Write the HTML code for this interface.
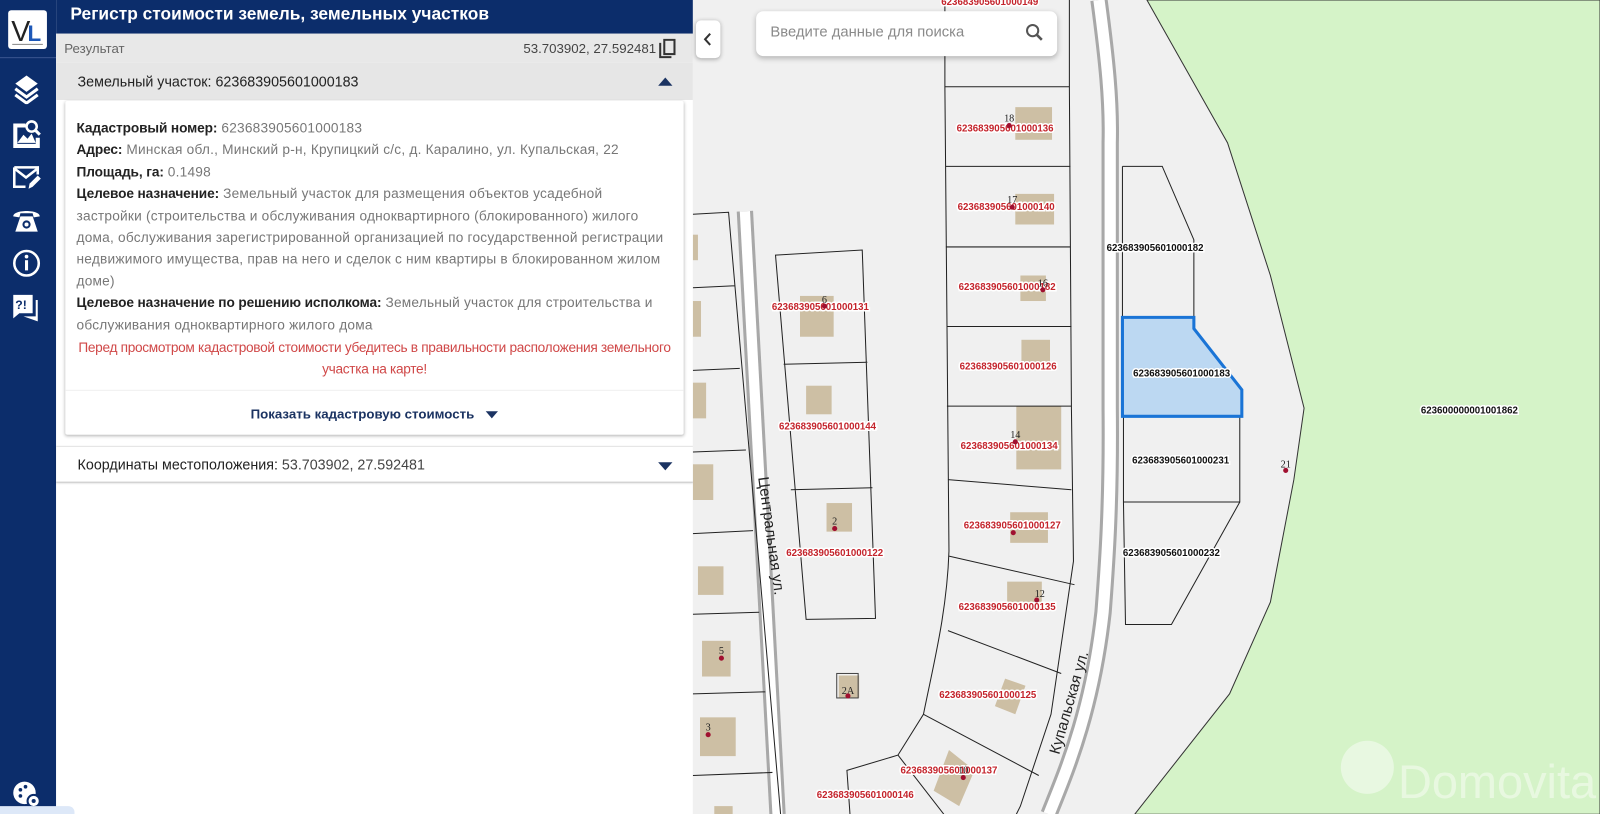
<!DOCTYPE html>
<html><head><meta charset="utf-8">
<style>
*{margin:0;padding:0;box-sizing:border-box}
html,body{width:1600px;height:814px;overflow:hidden;background:#f0f0f0}
#wrap{position:absolute;left:0;top:0;width:1568px;height:798px;transform:scale(1.0204);transform-origin:0 0;font-family:"Liberation Sans",sans-serif;overflow:hidden;background:#f0f0f0}
#side{position:absolute;left:0;top:0;width:55px;height:798px;background:#0c2d6b}
#logo{position:absolute;left:8px;top:10px;width:38px;height:38px;background:#fff;border-radius:3px}
#sep{position:absolute;left:0;top:56px;width:55px;border-top:1px solid #3a5590}
.ic{position:absolute;left:11px;width:30px;height:30px}
#panel{position:absolute;left:55px;top:0;width:624px;height:798px;background:#fff}
#hdr{height:33px;background:#0c2d6b;color:#fff;font-weight:bold;font-size:17px;padding:4px 0 0 14px}
#res{height:28px;background:#e8e8e8;color:#666;font-size:13px;padding:7px 8px;position:relative}
#res .r{position:absolute;right:36px;top:7px}
#sec{height:37px;background:#e6e6e6;font-size:14px;color:#222;padding:11px 21px;position:relative}
.tri{position:absolute;right:20px;width:0;height:0;border-left:7px solid transparent;border-right:7px solid transparent}
#card{position:absolute;left:9px;top:99px;width:606px;height:327px;background:#fff;box-shadow:0 1px 3px rgba(0,0,0,.3);border-radius:2px}
#txt{padding:16px 11px 0 11px;font-size:13.4px;line-height:21.4px;color:#777;white-space:nowrap;letter-spacing:0.22px}
#txt b{color:#222;font-weight:bold;letter-spacing:-0.1px}
.warn{color:#d04848;text-align:center;margin-top:1px;letter-spacing:-0.3px}
#btn{position:absolute;left:0;top:283px;width:606px;height:44px;border-top:1px solid #f0f0f0;text-align:center;font-size:13px;font-weight:bold;color:#1b3362;padding-top:15px}
#coord{position:absolute;left:0;top:437px;width:624px;height:36px;border-top:1px solid #e4e4e4;border-bottom:1px solid #ccc;box-shadow:0 1px 2px rgba(0,0,0,.2);font-size:14px;color:#222;padding:9px 21px}
#map{position:absolute;left:679px;top:0;width:889px;height:798px}
#search{position:absolute;left:741px;top:11px;width:295px;height:44px;background:#fff;border-radius:7px;box-shadow:0 2px 5px rgba(0,0,0,.25);font-size:14.5px;color:#8a8a8a;padding:13px 14px}
#back{position:absolute;left:682px;top:20px;width:24px;height:37px;background:#fff;border-radius:5px;box-shadow:0 1px 4px rgba(0,0,0,.3)}
</style></head><body><div id="wrap">
<div id="side">
 <div id="logo"><svg width="38" height="38"><text x="3" y="30" font-family="Liberation Sans" font-size="28" fill="#222">V</text><text x="19" y="30" font-family="Liberation Sans" font-size="22" font-weight="bold" fill="#1d58b8">L</text><rect x="4" y="33" width="30" height="1" fill="#888"/></svg></div>
 <div id="sep"></div>
 <svg class="ic" style="top:72px" viewBox="0 0 30 30"><path d="M15 2 L26 10 L15 18 L4 10Z" fill="#fff"/><path d="M4 15 L15 23 L26 15" stroke="#fff" stroke-width="3" fill="none"/><path d="M4 21 L15 29 L26 21" stroke="#fff" stroke-width="3" fill="none"/></svg>
 <svg class="ic" style="top:115px" viewBox="0 0 30 30"><path d="M2 6 H14 V10 H6 V26 H24 V20 H28 V30 H2Z" fill="#fff"/><path d="M6 25 L12 17 L16 21 L20 16 L24 25Z" fill="#fff"/><circle cx="20" cy="9" r="5" stroke="#fff" stroke-width="2.5" fill="none"/><path d="M23.5 12.5 L28 17" stroke="#fff" stroke-width="3"/></svg>
 <svg class="ic" style="top:158px" viewBox="0 0 30 30"><path d="M3 6 H26 V13 M3 6 V25 H14" stroke="#fff" stroke-width="2.5" fill="none"/><path d="M3 7 L14.5 16 L26 7" stroke="#fff" stroke-width="2.5" fill="none"/><path d="M17 27 L18 22 L26 14 L29 17 L21 25Z" fill="#fff"/></svg>
 <svg class="ic" style="top:200px" viewBox="0 0 30 30"><path d="M2 12 C2 5 28 5 28 12 L22 13 L21 9 H9 L8 13Z" fill="#fff"/><path d="M9 12 H21 L26 27 H4Z" fill="#fff"/><circle cx="15" cy="20" r="4" fill="#0c2d6b"/><circle cx="15" cy="20" r="2" fill="#fff"/></svg>
 <svg class="ic" style="top:243px" viewBox="0 0 30 30"><circle cx="15" cy="15" r="12" stroke="#fff" stroke-width="2.5" fill="none"/><rect x="13.5" y="12" width="3" height="10" fill="#fff"/><circle cx="15" cy="8.5" r="1.8" fill="#fff"/></svg>
 <svg class="ic" style="top:286px" viewBox="0 0 30 30"><path d="M2 3 H21 V21 H8 L2 26Z" fill="#fff"/><path d="M24 8 V24 H12 L26 29 V8Z" fill="#fff"/><text x="4" y="17" font-size="12" font-weight="bold" fill="#0c2d6b" font-family="Liberation Sans">?!</text></svg>
 <svg class="ic" style="top:763px" viewBox="0 0 30 30"><circle cx="13" cy="14" r="11" fill="#fff"/><circle cx="9" cy="11" r="1.8" fill="#0c2d6b"/><circle cx="14" cy="8" r="1.8" fill="#0c2d6b"/><circle cx="9" cy="17" r="1.8" fill="#0c2d6b"/><circle cx="22" cy="22" r="6" fill="#fff" stroke="#0c2d6b" stroke-width="2"/><circle cx="22" cy="22" r="2" fill="#0c2d6b"/></svg>
</div>
<div id="panel">
 <div id="hdr">Регистр стоимости земель, земельных участков</div>
 <div id="res">Результат<span class="r" style="color:#444">53.703902, 27.592481</span>
  <svg style="position:absolute;right:16px;top:5px" width="18" height="20" viewBox="0 0 18 20"><path d="M2 4 V18 H13" stroke="#333" stroke-width="2" fill="none"/><rect x="6" y="1" width="10" height="14" stroke="#333" stroke-width="2" fill="none"/></svg></div>
 <div id="sec">Земельный участок: 623683905601000183<div class="tri" style="top:15px;border-bottom:8px solid #1b3362"></div></div>
 <div id="card"><div id="txt">
  <b>Кадастровый номер:</b> 623683905601000183<br>
  <b>Адрес:</b> Минская обл., Минский р-н, Крупицкий с/с, д. Каралино, ул. Купальская, 22<br>
  <b>Площадь, га:</b> 0.1498<br>
  <b>Целевое назначение:</b> Земельный участок для размещения объектов усадебной<br>застройки (строительства и обслуживания одноквартирного (блокированного) жилого<br>дома, обслуживания зарегистрированной организацией по государственной регистрации<br>недвижимого имущества, прав на него и сделок с ним квартиры в блокированном жилом<br>доме)<br>
  <b>Целевое назначение по решению исполкома:</b> Земельный участок для строительства и<br>обслуживания одноквартирного жилого дома
  <div class="warn">Перед просмотром кадастровой стоимости убедитесь в правильности расположения земельного<br>участка на карте!</div>
 </div>
 <div id="btn">Показать кадастровую стоимость <span style="display:inline-block;margin-left:8px;border-left:6px solid transparent;border-right:6px solid transparent;border-top:7px solid #1b3362;vertical-align:middle"></span></div></div>
 <div id="coord">Координаты местоположения: <span style="color:#444">53.703902, 27.592481</span><div class="tri" style="top:15px;border-top:8px solid #1b3362"></div></div>
</div>
<svg id="map" viewBox="679 0 889 798" width="889" height="798">
 <rect x="679" y="0" width="889" height="798" fill="#f0f0f0"/>
 <path d="M1124 0 L1203 140 L1245 270 L1278 400 L1268 470 L1245 590 L1205 680 L1112 798 L1568 798 L1568 0Z" fill="#d5f3c8" stroke="#333" stroke-width="1"/>
 <g fill="none">
  <path d="M1077 0 C1085 60 1089 100 1088 140 L1088 400 C1089 500 1084 560 1081 600 C1070 700 1043 760 1028 798" stroke="#a8a8a8" stroke-width="17"/>
  <path d="M1077 0 C1085 60 1089 100 1088 140 L1088 400 C1089 500 1084 560 1081 600 C1070 700 1043 760 1028 798" stroke="#fff" stroke-width="11"/>
  <path d="M730 207 L762 798" stroke="#a8a8a8" stroke-width="16"/>
  <path d="M730 207 L762 798" stroke="#fff" stroke-width="10"/>
 </g>
 <g fill="#cdbfa4">
  <rect x="995" y="105" width="36" height="32"/><rect x="995" y="190" width="38" height="30"/><rect x="1000" y="270" width="25" height="25"/>
  <rect x="1001" y="333" width="28" height="28"/><rect x="996" y="398" width="44" height="62"/><rect x="990" y="502" width="37" height="30"/>
  <rect x="987" y="570" width="34" height="20"/><polygon points="985,665 1005,672 995,700 975,692"/><polygon points="930,735 955,755 940,790 915,775"/>
  <rect x="784" y="290" width="33" height="40"/><rect x="790" y="378" width="25" height="28"/><rect x="810" y="493" width="25" height="28"/>
  <rect x="822" y="662" width="20" height="22"/>
  <rect x="679" y="230" width="5" height="25"/><rect x="679" y="295" width="8" height="35"/><rect x="679" y="375" width="13" height="35"/><rect x="679" y="455" width="20" height="35"/>
  <rect x="684" y="555" width="25" height="28"/><rect x="688" y="628" width="28" height="35"/><rect x="686" y="703" width="35" height="38"/><rect x="700" y="790" width="18" height="24"/>
 </g>
 <g fill="none" stroke="#222" stroke-width="1">
  <path d="M926 0 V85 L930 540 C928 600 915 650 905 700 L880 740 L830 755 L833 798"/>
  <path d="M1048 0 V85 L1050 400 L1052 550 L1030 700 L1000 790 L996 798"/>
  <path d="M926 85 H1048 M927 163 H1049 M927 242 H1049 M928 320 H1050 M928 398 H1050 M929 470 L1050 480 M930 545 L1053 573 M929 618 L1040 660 M905 700 L1018 760 M880 740 L925 798"/>
  <path d="M760 250 L845 245 L858 606 L790 607 Z M768 357 L850 355 M775 480 L855 478"/>
  <path d="M679 210 L714 208 L765 798 M679 282 L720 280 M679 363 L725 361 M679 443 L731 441 M679 523 L738 520 M679 602 L744 600 M679 680 L750 678 M679 760 L757 757"/>
  <path d="M1100 163 L1139 163 L1170 235 L1170 311 M1100 163 V311"/>
  <path d="M1101 408 V492 H1215 V408 M1101 492 L1103 612 L1148 612 L1215 492"/>
  <rect x="820" y="660" width="21" height="24" stroke="#444"/>
 </g>
 <path d="M1100 311 H1170 V322 L1217 382 V408 H1100Z" fill="#bcd8f2" stroke="#1a74d6" stroke-width="3"/>
 <g font-family="Liberation Sans" font-size="9.5" font-weight="bold" text-anchor="middle" paint-order="stroke" stroke="#fff" stroke-width="3">
  <g fill="#c4242c">
   <text x="970" y="5">623683905601000149</text>
   <text x="985" y="129">623683905601000136</text><text x="986" y="206">623683905601000140</text><text x="987" y="284">623683905601000182</text>
   <text x="988" y="362">623683905601000126</text><text x="989" y="440">623683905601000134</text><text x="992" y="518">623683905601000127</text>
   <text x="987" y="598">623683905601000135</text><text x="968" y="684">623683905601000125</text><text x="930" y="758">623683905601000137</text>
   <text x="848" y="782">623683905601000146</text><text x="804" y="304">623683905601000131</text><text x="811" y="421">623683905601000144</text>
   <text x="818" y="545">623683905601000122</text>
  </g>
  <g fill="#111">
   <text x="1132" y="246">623683905601000182</text><text x="1158" y="369">623683905601000183</text><text x="1157" y="454">623683905601000231</text>
   <text x="1148" y="545">623683905601000232</text><text x="1440" y="405">623600000001001862</text>
  </g>
 </g>
 <g font-family="Liberation Serif" font-size="10" fill="#222" text-anchor="middle">
  <text x="989" y="119">18</text><text x="992" y="199">17</text><text x="1022" y="281">16</text><text x="995" y="429">14</text><text x="1019" y="585">12</text>
  <text x="944" y="758">10</text><text x="808" y="297">6</text><text x="818" y="514">2</text><text x="831" y="680">2A</text><text x="707" y="641">5</text><text x="694" y="716">3</text><text x="1260" y="458">21</text>
 </g>
 <g fill="#a01030"><circle cx="989" cy="123" r="2.5"/><circle cx="992" cy="203" r="2.5"/><circle cx="1022" cy="284" r="2.5"/><circle cx="995" cy="433" r="2.5"/><circle cx="993" cy="522" r="2.5"/><circle cx="1016" cy="588" r="2.5"/><circle cx="944" cy="762" r="2.5"/><circle cx="808" cy="300" r="2.5"/><circle cx="818" cy="518" r="2.5"/><circle cx="831" cy="682" r="2.5"/><circle cx="707" cy="645" r="2.5"/><circle cx="694" cy="720" r="2.5"/><circle cx="1260" cy="461" r="2.5"/></g>
 <text font-family="Liberation Sans" font-size="15" fill="#222" transform="translate(743,468) rotate(82)">Центральная ул.</text>
 <text font-family="Liberation Sans" font-size="15" fill="#222" transform="translate(1038,740) rotate(-74)">Купальская ул.</text>
 <circle cx="1340" cy="752" r="26" fill="#fff" opacity=".45"/>
 <text x="1370" y="782" font-family="Liberation Sans" font-size="46" fill="#fff" opacity=".45">Domovita</text>
</svg>
<div id="back"><svg width="24" height="37"><path d="M14 13 L9 18.5 L14 24" stroke="#333" stroke-width="2" fill="none"/></svg></div>
<div id="search">Введите данные для поиска<svg style="position:absolute;right:12px;top:11px" width="20" height="20"><circle cx="8" cy="8" r="5.5" stroke="#555" stroke-width="2" fill="none"/><path d="M12 12 L17 17" stroke="#555" stroke-width="2.5"/></svg></div>
<div style="position:absolute;left:0;top:790px;width:73px;height:10px;background:#dde8f8;border-radius:0 6px 0 0"></div>
</div></body></html>
